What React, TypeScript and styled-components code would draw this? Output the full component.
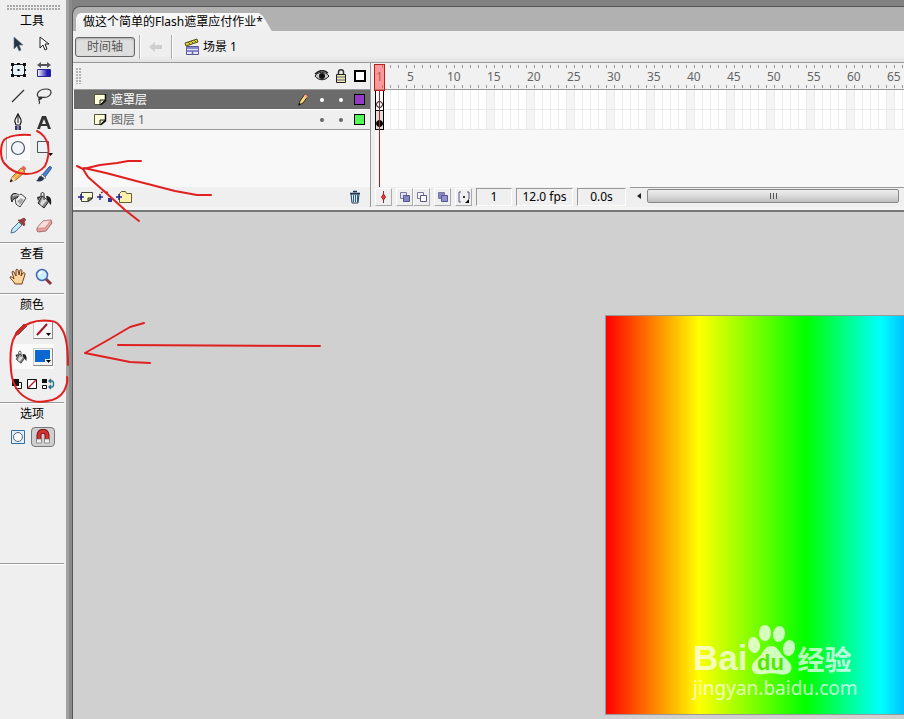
import React from "react";
import styled, { createGlobalStyle, css } from "styled-components";

const GlobalStyle = createGlobalStyle`
  * { box-sizing: border-box; }
  body {
    margin: 0;
    background: #d0d0d0;
    color: #000;
    font: 12px/16px "Noto Sans", "Noto Sans CJK SC", sans-serif;
  }
  button { font: inherit; color: inherit; border: 0; padding: 0; background: none; }
  svg { display: block; flex: none; }
`;

const Page = styled.div`
  position: relative;
  display: flex;
  min-height: 100vh;
  overflow: hidden;
`;

/* ---------- tools panel ---------- */

const Tools = styled.aside`
  flex: none;
  width: 66px;
  background: #efefef;
`;

const Grip = styled.div`
  height: 5px;
  margin: 5px 6px 0 7px;
  background: radial-gradient(circle at 1px 1px, #777 0 0.5px, transparent 1px) 0 0 / 3px 3px;
`;

const Section = styled.section<{ $min?: number }>`
  min-height: ${(p) => p.$min ?? 0}px;
  margin-right: 2px;
  padding-bottom: 3px;
  border-bottom: 1px solid #9a9a9a;
  box-shadow: 0 1px 0 #fff;
`;

const SectionTitle = styled.h2`
  margin: 0;
  font-size: 12px;
  font-weight: 400;
  line-height: 21px;
  text-align: center;
`;

const ToolGrid = styled.div`
  display: grid;
  grid-template-columns: 26px 26px;
  grid-auto-rows: 26px;
  padding-left: 5px;
`;

const ToolButton = styled.button<{ $active?: boolean; $pressed?: boolean }>`
  display: flex;
  align-items: center;
  justify-content: center;
  ${(p) =>
    p.$active &&
    css`
      margin: 1px;
      background: #fafafa;
      border: 1px solid #fff;
      border-left-color: #aaa;
    `}
  ${(p) =>
    p.$pressed &&
    css`
      width: 24px;
      height: 20px;
      margin: 3px 0;
      background: #cfcfcf;
      border: 1px solid #777;
      border-radius: 4px;
    `}
`;

const ColorRow = styled.div<{ $lit?: boolean }>`
  display: flex;
  align-items: center;
  gap: 4px;
  height: 25px;
  margin: 2px 10px 1px 13px;
  background: ${(p) => (p.$lit ? "#fafafa" : "transparent")};
`;

const SwatchButton = styled.button`
  display: flex;
  align-items: center;
  justify-content: center;
  width: 20px;
  height: 18px;
  background: #f6f6f6;
  border: 1px solid #ccc;
  border-right-color: #888;
  border-bottom-color: #888;
`;

const MiniRow = styled.div`
  display: flex;
  justify-content: space-between;
  align-items: center;
  height: 28px;
  margin: 0 9px 0 11px;
`;

const Gutter = styled.div`
  flex: none;
  width: 6px;
  background: linear-gradient(90deg, #a2a2a2 0 50%, #8a8a8a 50%);
`;

/* ---------- document ---------- */

const Workspace = styled.main`
  display: flex;
  flex: 1;
  flex-direction: column;
  min-width: 0;
  padding-top: 6px;
  background: #828282;
`;

const DocumentPanel = styled.div`
  display: flex;
  flex: 1;
  flex-direction: column;
  min-width: 0;
  border-top: 1px solid #555;
  border-left: 1px solid #555;
  border-top-left-radius: 8px;
  background: #b1b1b1;
  overflow: hidden;
`;

const TabBar = styled.div`
  display: flex;
  align-items: flex-end;
  height: 24px;
  padding-left: 3px;
`;

const Tab = styled.button`
  height: 18px;
  padding: 0 9px 0 7px;
  background: linear-gradient(#fafafa, #efefef);
  white-space: nowrap;
  line-height: 18px;
  clip-path: polygon(0 5px, 2px 1px, 5px 0, calc(100% - 13px) 0, calc(100% - 9px) 3px, 100% 100%, 0 100%);
`;

const EditBar = styled.div`
  display: flex;
  align-items: center;
  height: 32px;
  padding-left: 2px;
  background: linear-gradient(#efefef 80%, #e2e2e2);
  border-bottom: 1px solid #999;
`;

const TimelineToggle = styled.button`
  width: 60px;
  height: 20px;
  line-height: 18px;
  color: #555;
  background: #dedede;
  border: 1px solid #666;
  border-radius: 3px;
  box-shadow: inset 0 1px 2px #aaa;
`;

const BarDivider = styled.span`
  width: 2px;
  height: 24px;
  margin: 0 4px;
  background: linear-gradient(90deg, #aaa 50%, #fff 50%);
`;

const BackButton = styled.button`
  display: flex;
  justify-content: center;
  width: 22px;
`;

const SceneLabel = styled.span`
  display: flex;
  align-items: center;
  gap: 3px;
  margin-left: 7px;
`;

const Timeline = styled.section`
  display: grid;
  grid-template-columns: 297px minmax(0, 1fr);
  height: 144px;
  background: #f8f8f8;
`;

const LayerPane = styled.div`
  display: flex;
  flex-direction: column;
  padding-left: 1px;
`;

const layerColumns = css`
  display: grid;
  grid-template-columns: minmax(0, 1fr) repeat(4, 19px);
  align-items: center;
  justify-items: center;
  padding-right: 1px;
`;

const LayerHeader = styled.div`
  ${layerColumns}
  height: 27px;
  background: #efefef;
  border-bottom: 1px solid #999;
`;

const PaneGrip = styled.span`
  justify-self: start;
  width: 6px;
  height: 16px;
  margin-left: 2px;
  background: radial-gradient(circle at 1px 1px, #888 0 0.5px, transparent 1px) 0 0 / 3px 3px;
`;

const LayerRow = styled.div<{ $selected?: boolean }>`
  ${layerColumns}
  height: 20px;
  color: ${(p) => (p.$selected ? "#fff" : "#666")};
  background: ${(p) => (p.$selected ? "#6b6b6b" : "#efefef")};
  border-bottom: 1px solid ${(p) => (p.$selected ? "#fff" : "#999")};
`;

const LayerName = styled.span`
  display: flex;
  align-items: center;
  justify-self: start;
  gap: 4px;
  padding-left: 19px;
  line-height: 19px;
`;

const Dot = styled.button`
  width: 4px;
  height: 4px;
  border-radius: 50%;
  background: currentColor;
`;

const OutlineSwatch = styled.button<{ $color: string; $bold?: boolean }>`
  width: ${(p) => (p.$bold ? 12 : 11)}px;
  height: ${(p) => (p.$bold ? 12 : 11)}px;
  border: ${(p) => (p.$bold ? 2 : 1)}px solid #000;
  background: ${(p) => p.$color};
`;

const LayerFooter = styled.div`
  display: flex;
  align-items: center;
  gap: 3px;
  height: 20px;
  margin-top: auto;
  padding: 0 9px 0 4px;
  background: #efefef;
`;

const Spacer = styled.span`
  flex: 1;
`;

const FramePane = styled.div`
  position: relative;
  display: flex;
  flex-direction: column;
  padding-left: 4px;
  border-left: 1px solid #999;
  overflow: hidden;
  background: linear-gradient(90deg, #efefef 4px, transparent 4px);
`;

const tick = "repeating-linear-gradient(90deg, transparent 0 7px, #999 7px 8px)";

const Ruler = styled.div`
  display: flex;
  flex: none;
  height: 27px;
  padding-top: 1px;
  color: #666;
  line-height: 26px;
  background: ${tick} 0 2px / 100% 3px no-repeat, ${tick} 0 22px / 100% 3px no-repeat, #f1f1f1;
  border-bottom: 1px solid #999;
`;

const RulerMark = styled.span<{ $first?: boolean }>`
  flex: none;
  width: ${(p) => (p.$first ? 32 : 40)}px;
  padding-left: ${(p) => (p.$first ? 1 : 0)}px;
  &:last-child { width: auto; }
`;

const FrameRow = styled.div`
  flex: none;
  height: 20px;
  border-bottom: 1px solid #e8e8e8;
  background:
    repeating-linear-gradient(90deg, transparent 0 7px, #ebebeb 7px 8px),
    repeating-linear-gradient(90deg, #fff 0 32px, #f5f5f5 32px 40px);
`;

const Keyframe = styled.div<{ $filled?: boolean }>`
  display: flex;
  align-items: flex-end;
  justify-content: center;
  width: 9px;
  height: 20px;
  padding-bottom: 2px;
  border: 1px solid #000;
  border-top-width: ${(p) => (p.$filled ? 1 : 0)}px;
  border-bottom-width: ${(p) => (p.$filled ? 1 : 0)}px;
  background: ${(p) => (p.$filled ? "#ddd" : "#fff")};
  &::after {
    content: "";
    width: 5px;
    height: 5px;
    border: 1px solid #000;
    border-radius: 50%;
    background: ${(p) => (p.$filled ? "#000" : "#fff")};
  }
`;

const Playhead = styled.div`
  position: absolute;
  top: 1px;
  bottom: 20px;
  left: 4px;
  display: flex;
  flex-direction: column;
  align-items: center;
  width: 9px;
  &::before {
    content: "";
    width: 100%;
    height: 25px;
    border: 1px solid #b82020;
    background: rgba(255, 80, 80, 0.55);
  }
  &::after {
    content: "";
    flex: 1;
    width: 1px;
    background: #b81818;
  }
`;

const StatusBar = styled.div`
  display: flex;
  align-items: stretch;
  gap: 4px;
  height: 20px;
  margin-top: auto;
  margin-left: -4px;
  padding: 1px 0 1px 4px;
  background: #efefef;
`;

const ButtonPair = styled.span`
  display: flex;
`;

const FrameButton = styled.button`
  display: flex;
  align-items: center;
  justify-content: center;
  width: 17px;
  border: 1px solid #fff;
  border-right-color: #aaa;
  border-bottom-color: #aaa;
`;

const Readout = styled.output<{ $width: number }>`
  flex: none;
  width: ${(p) => p.$width}px;
  border: 1px solid #fff;
  border-top-color: #999;
  border-left-color: #999;
  line-height: 16px;
  text-align: center;
  white-space: nowrap;
`;

const Scrollbar = styled.div`
  display: flex;
  flex: 1;
  min-width: 0;
  margin-top: -1px;
  padding: 1px 5px 3px 0;
  border-top: 1px solid #999;
`;

const ScrollArrow = styled.button`
  display: flex;
  align-items: center;
  justify-content: center;
  width: 17px;
`;

const ScrollThumb = styled.div`
  display: flex;
  flex: 1;
  align-items: center;
  justify-content: center;
  border: 1px solid #888;
  border-radius: 2px;
  background: linear-gradient(#eee, #ddd 45%, #bebebe);
`;

const Stage = styled.section`
  flex: 1;
  min-height: 508px;
  padding: 103px 0 0 532px;
  border-top: 2px solid #777;
  background: #d0d0d0;
  overflow: hidden;
`;

const PanelEdge = styled.div`
  height: 3px;
  background: #f4f4f4;
`;

const Canvas = styled.div`
  position: relative;
  width: 550px;
  height: 400px;
  border: 1px solid #999;
  background: linear-gradient(
    90deg,
    #f00 0, #ff0 93px, #0f0 200px, #0ff 275px, #00f 370px, #f0f 460px, #f00 550px
  );
`;

const Watermark = styled.div`
  position: absolute;
  left: 87px;
  bottom: 13px;
  color: rgba(255, 255, 255, 0.74);
  white-space: nowrap;
`;

const Brand = styled.div`
  display: flex;
  align-items: flex-end;
  height: 53px;
`;

const BrandLatin = styled.span`
  font: 700 35px/34px "Liberation Sans", sans-serif;
`;

const BrandHan = styled.span`
  margin-left: 2px;
  font: 700 27px/32px "Noto Sans CJK SC", sans-serif;
`;

const Site = styled.div`
  font-size: 19px;
  line-height: 26px;
`;

const Annotations = styled.svg`
  position: absolute;
  top: 0;
  left: 0;
  pointer-events: none;
`;

/* ---------- icons ---------- */

const Icon = ({ children, w = 18, h = 18 }: { children: React.ReactNode; w?: number; h?: number }) => (
  <svg width={w} height={h} viewBox={`0 0 ${w} ${h}`} fill="none" aria-hidden="true">
    {children}
  </svg>
);

const bucketPaths = (
  <>
    <path d="M7 5l7 5-5 7-6-5z" fill="#888" stroke="#222" />
    <path d="M8 6l4 3-5 6-2-2z" fill="#ddd" />
    <path d="M9 9V3c0-2-3-2-3 0v3" stroke="#222" />
    <path d="M11 5c4 0 6 2 5 9-2-1-2-4-4-5z" fill="#222" />
    <path d="M2 6l4-1-3 5z" fill="#333" />
  </>
);

const tools: { name: string; active?: boolean; icon: React.ReactNode }[] = [
  { name: "选择", icon: <path d="M5 2v12l3-3 2 5 2-1-2-5h4z" fill="#263445" stroke="#61758a" strokeWidth=".6" /> },
  { name: "部分选取", icon: <path d="M5 2v11l3-3 2 5 2-1-2-5h4z" fill="#fff" stroke="#222" /> },
  {
    name: "任意变形",
    icon: (
      <>
        <path d="M3.500 3.500h12v11h-12z" fill="#e7f3fa" stroke="#222" />
        <path d="M2 2h3v3H2zM8 2h3v2H8zM14 2h3v3h-3zM2 8h2v2H2zM15 8h2v2h-2zM2 13h3v3H2zM8 14h3v2H8zM14 13h3v3h-3zM8.500 8h2v2h-2z" fill="#111" />
      </>
    ),
  },
  {
    name: "填充变形",
    icon: (
      <>
        <defs>
          <linearGradient id="blueFade">
            <stop stopColor="#fff" />
            <stop offset=".75" stopColor="#2018b0" />
          </linearGradient>
        </defs>
        <path d="M2 4l4-3v2h6V1l4 3-4 3V5H6v2z" fill="#555" />
        <path d="M2.500 8.500h13v7h-13z" fill="url(#blueFade)" stroke="#2a2790" />
      </>
    ),
  },
  { name: "线条", icon: <path d="M3 15L15 3" stroke="#333" strokeWidth="1.300" /> },
  {
    name: "套索",
    icon: <path d="M5 11C-1 8 4 2 11 2s6 6 1 8c-3 1-6 0-7 0-2 1-1 3 1 2s-1-2-2 0 2 2 0 5" stroke="#333" strokeWidth="1.200" />,
  },
  {
    name: "钢笔",
    icon: (
      <>
        <path d="M9 1c-2 4-4 6-3 8l1 3h4l1-3c1-2-1-4-3-8z" fill="#f5f5f5" stroke="#111" strokeWidth="1.200" />
        <path d="M9 2v6M9 8v2" stroke="#111" />
        <path d="M6 13h6v4H6z" fill="#33335e" />
        <path d="M8 13h2v4H8z" fill="#8585ad" />
      </>
    ),
  },
  { name: "文本", icon: <path fillRule="evenodd" d="M7 3h4l5 13h-3l-1-3H6l-1 3H2zM9 6l-2 5h4z" fill="#333" /> },
  { name: "椭圆", active: true, icon: <circle cx="9" cy="9" r="6.500" fill="#f0f5f8" stroke="#4e5860" strokeWidth="1.200" /> },
  {
    name: "矩形",
    icon: (
      <>
        <path d="M2.500 2.500h11v11h-11z" fill="#edf2f5" stroke="#4a545c" />
        <path d="M13 14h5l-2.500 3z" fill="#000" />
      </>
    ),
  },
  {
    name: "铅笔",
    icon: (
      <>
        <path d="M1 17l2-5 9-9 4 4-9 8z" fill="#f4a638" stroke="#8a4a20" strokeWidth=".7" />
        <path d="M12 3l2-2c2 0 3 2 3 3l-2 3z" fill="#e06858" />
        <path d="M3 12l4 3-5 2z" fill="#f6dfb5" />
        <path d="M1 17l1-3 2 2z" fill="#111" />
        <path d="M5 13l9-8" stroke="#ffe3a0" />
      </>
    ),
  },
  {
    name: "刷子",
    icon: (
      <>
        <path d="M7 10l7-8c2-1 3 0 2 2l-6 8z" fill="#4a82d4" stroke="#1d3d7a" strokeWidth=".8" />
        <path d="M7 9l4 4-2 1-3-3z" fill="#ddd" stroke="#555" strokeWidth=".5" />
        <path d="M6 11c-3 0-2 3-5 5 4 1 8 0 8-3z" fill="#26344c" />
      </>
    ),
  },
  {
    name: "墨水瓶",
    icon: (
      <>
        <path d="M6 7l6-4 5 4-6 9-4-3z" fill="#f0f0f0" stroke="#444" />
        <path d="M8 10l4-3 3 2-4 5z" fill="#aaa" />
        <path d="M10 4C4 0 0 4 3 11c1-3 2-4 5-4z" fill="#777" stroke="#222" />
        <path d="M4 5c3-2 5-1 7 0" stroke="#eee" />
      </>
    ),
  },
  { name: "颜料桶", icon: bucketPaths },
  {
    name: "滴管",
    icon: (
      <>
        <path d="M2 16l1-4 7-7 3 3-7 7z" fill="#c2e4f8" stroke="#45627a" strokeWidth=".9" />
        <path d="M9 3l6 6 1-2-1-2c3-2 1-5-2-3l-2 1z" fill="#9f3a38" stroke="#682020" strokeWidth=".6" />
      </>
    ),
  },
  {
    name: "橡皮擦",
    icon: (
      <>
        <path d="M2 11l6-7 8-1 1 3-6 8-8 1-1-1z" fill="#e6a0a0" stroke="#955" strokeWidth=".8" />
        <path d="M2 11l6-7 8-1-6 8z" fill="#fbdcd8" stroke="#b77" strokeWidth=".6" />
      </>
    ),
  },
];

const HandIcon = () => (
  <Icon>
    <path
      d="M6 16c-1-3-5-5-5-7 1-1 2 0 4 2L3 4c0-1 2-1 2 0l2 4V2c0-1 2-1 2 0l1 5 1-5c1-1 2 0 2 1l-1 5 2-3c1-1 2 0 2 1-1 4-2 6-3 10z"
      fill="#fbd49c"
      stroke="#6a3f1c"
    />
  </Icon>
);

const ZoomIcon = () => (
  <Icon>
    <path d="M11 11l5 5" stroke="#8c343c" strokeWidth="3" />
    <circle cx="7" cy="7" r="5.500" fill="#cdeefd" stroke="#3f68b0" strokeWidth="1.500" />
    <path d="M4 7c0-2 1-3 3-3" stroke="#fff" strokeWidth="1.500" />
  </Icon>
);

const LayerIcon = () => (
  <Icon w={14} h={13}>
    <path d="M1.500 1.500h11v6l-5 4h-6z" fill="#ffffdc" stroke="#55553a" />
    <path d="M12.500 1v7l-5 4" stroke="#111" strokeWidth="1.500" />
    <path d="M7 12V7h5z" fill="#e4e4b0" stroke="#222" />
  </Icon>
);

const Plus = () => <path d="M0 7h6M3 4v6" stroke="#262690" strokeWidth="1.500" />;

const stacked = (back: string, front: string) => (
  <Icon w={12} h={12}>
    <path d="M1.500 1.500h6v6h-6z" fill={back} stroke="#7878a5" />
    <path d="M4.500 4.500h6v6h-6z" fill={front} stroke="#55558c" />
  </Icon>
);

/* ---------- parts ---------- */

const ToolsPanel = () => (
  <Tools aria-label="工具">
    <Grip />
    <Section $min={233}>
      <SectionTitle>工具</SectionTitle>
      <ToolGrid>
        {tools.map((t) => (
          <ToolButton key={t.name} aria-label={t.name} $active={t.active}>
            <Icon>{t.icon}</Icon>
          </ToolButton>
        ))}
      </ToolGrid>
    </Section>
    <Section>
      <SectionTitle>查看</SectionTitle>
      <ToolGrid>
        <ToolButton aria-label="手形">
          <HandIcon />
        </ToolButton>
        <ToolButton aria-label="缩放">
          <ZoomIcon />
        </ToolButton>
      </ToolGrid>
    </Section>
    <Section $min={109}>
      <SectionTitle>颜色</SectionTitle>
      <ColorRow>
        <Icon w={16} h={16}>
          <path d="M2 14l1-4 8-8 3 2-8 8z" fill="#9b4032" stroke="#6e2820" strokeWidth=".7" />
        </Icon>
        <SwatchButton aria-label="笔触颜色">
          <Icon w={18} h={16}>
            <path d="M3 13L13 2" stroke="#a41428" strokeWidth="2" />
            <path d="M12 11h5l-2.500 3z" fill="#000" />
          </Icon>
        </SwatchButton>
      </ColorRow>
      <ColorRow $lit>
        <svg width="16" height="14" viewBox="0 0 18 18" fill="none" aria-hidden="true">
          {bucketPaths}
        </svg>
        <SwatchButton aria-label="填充色">
          <Icon w={18} h={16}>
            <path d="M1 1h15v12H1z" fill="#0c68d0" />
            <path d="M11 10h7v6h-7z" fill="#f6f6f6" />
            <path d="M12 11h5l-2.500 3z" fill="#000" />
          </Icon>
        </SwatchButton>
      </ColorRow>
      <MiniRow>
        <ToolButton aria-label="黑白">
          <Icon w={12} h={12}>
            <path d="M4.500 4.500h6v6h-6z" fill="#fff" stroke="#111" />
            <path d="M1 1h7v7H1z" fill="#111" />
          </Icon>
        </ToolButton>
        <ToolButton aria-label="没有颜色">
          <Icon w={12} h={12}>
            <path d="M1.500 1.500h9v9h-9z" fill="#fff" stroke="#111" />
            <path d="M2 10l8-8" stroke="#c22030" strokeWidth="1.500" />
          </Icon>
        </ToolButton>
        <ToolButton aria-label="交换颜色">
          <Icon w={14} h={12}>
            <path d="M1 1h5v4H1z" fill="#111" />
            <path d="M1.500 7.500h4v3h-4z" fill="#fff" stroke="#111" />
            <path d="M8 3h3c2 0 2 6 0 6H8M10 1L8 3l2 2M10 7L8 9l2 2" stroke="#2b7388" strokeWidth="1.400" />
          </Icon>
        </ToolButton>
      </MiniRow>
    </Section>
    <Section $min={161}>
      <SectionTitle>选项</SectionTitle>
      <ToolGrid>
        <ToolButton aria-label="对象绘制">
          <Icon w={16} h={16}>
            <path d="M1.500 1.500h13v13h-13z" fill="#e4f1fa" stroke="#35709e" />
            <circle cx="8" cy="8" r="4.500" fill="#f8fcff" stroke="#56636e" />
          </Icon>
        </ToolButton>
        <ToolButton aria-label="贴紧至对象" $pressed>
          <Icon w={16} h={16}>
            <path d="M4 12V6c0-5 8-5 8 0v6" stroke="#7a1014" strokeWidth="5" />
            <path d="M4 12V6c0-5 8-5 8 0v6" stroke="#d33032" strokeWidth="3" />
            <path d="M1.500 10h5v4h-5zM9.500 10h5v4h-5z" fill="#eee" stroke="#666" strokeWidth=".6" />
          </Icon>
        </ToolButton>
      </ToolGrid>
    </Section>
  </Tools>
);

const layers = [
  { name: "遮罩层", color: "#9838c8", selected: true },
  { name: "图层 1", color: "#50f858", selected: false },
];

const Layers = () => (
  <LayerPane>
    <LayerHeader>
      <PaneGrip />
      <span />
      <Icon w={16} h={12}>
        <path d="M1 6c3-5 10-5 14 0-4 5-10 5-14 0z" fill="#ccc" stroke="#111" />
        <circle cx="8" cy="6" r="3" fill="#111" />
        <path d="M1 4c4-4 9-4 13-1" stroke="#222" strokeWidth="1.500" />
      </Icon>
      <Icon w={12} h={14}>
        <path d="M3.500 6V3c0-3 5-3 5 0v3" stroke="#333" strokeWidth="1.500" />
        <path d="M1.500 5.500h9v8h-9z" fill="#f3e7a4" stroke="#222" />
        <path d="M2 8h8M2 11h8" stroke="#536390" />
      </Icon>
      <OutlineSwatch $color="#fff" $bold aria-label="显示所有图层轮廓" />
    </LayerHeader>
    {layers.map((l) => (
      <LayerRow key={l.name} $selected={l.selected}>
        <LayerName>
          <LayerIcon />
          {l.name}
        </LayerName>
        {l.selected ? (
          <Icon w={12} h={14}>
            <path d="M2 12l1-4 5-7 3 2-5 7z" fill="#f5d878" stroke="#3c2a18" />
            <path d="M8 1l3 2-1 2-3-2z" fill="#e99a80" />
            <path d="M1 13l1-3 2 1z" fill="#111" />
          </Icon>
        ) : (
          <span />
        )}
        <Dot aria-label="显示图层" />
        <Dot aria-label="锁定图层" />
        <OutlineSwatch $color={l.color} aria-label="显示轮廓" />
      </LayerRow>
    ))}
    <LayerFooter>
      <ToolButton aria-label="插入图层">
        <Icon w={16} h={14}>
          <path d="M3.500 2.500h11v6l-4 3h-7z" fill="#ffffd5" stroke="#444" />
          <path d="M10 11V8h4z" fill="#d8d8a0" stroke="#222" />
          <path d="M0 4h3v6H0z" fill="#efefef" />
          <Plus />
        </Icon>
      </ToolButton>
      <ToolButton aria-label="添加运动引导层">
        <Icon w={16} h={14}>
          <Plus />
          <path d="M4 3l3-2 3 1 2 4" stroke="#b02030" strokeDasharray="2 1" strokeWidth="1.500" />
          <path d="M11 8h4v4h-4z" fill="#34349a" />
        </Icon>
      </ToolButton>
      <ToolButton aria-label="插入图层文件夹">
        <Icon w={16} h={14}>
          <path d="M3.500 12.500v-9l2-2h4l1 2h5v9z" fill="#fbf0ad" stroke="#665c30" />
          <Plus />
        </Icon>
      </ToolButton>
      <Spacer />
      <ToolButton aria-label="删除图层">
        <Icon w={12} h={14}>
          <path d="M2 4h8l-1 9H3z" fill="#dcebf7" stroke="#223f5c" />
          <path d="M4.500 5v7M6.500 5v7M8.500 5v7" stroke="#345d82" />
          <path d="M1 3.500h10M4 1.500h4" stroke="#1d3750" strokeWidth="1.500" />
        </Icon>
      </ToolButton>
    </LayerFooter>
  </LayerPane>
);

const marks = [1, ...Array.from({ length: 13 }, (_, i) => (i + 1) * 5)];

const Frames = () => (
  <FramePane>
    <Ruler>
      {marks.map((n) => (
        <RulerMark key={n} $first={n === 1}>
          {n}
        </RulerMark>
      ))}
    </Ruler>
    <FrameRow>
      <Keyframe />
    </FrameRow>
    <FrameRow>
      <Keyframe $filled />
    </FrameRow>
    <Playhead />
    <StatusBar>
      <FrameButton aria-label="帧居中">
        <Icon w={9} h={14}>
          <path d="M4.500 1v12" stroke="#b41c1c" />
          <path d="M4.500 4l2 3-2 3-2-3z" fill="#e04040" stroke="#b41c1c" />
        </Icon>
      </FrameButton>
      <ButtonPair>
        <FrameButton aria-label="绘图纸外观">{stacked("#e2e2f2", "#8585c4")}</FrameButton>
        <FrameButton aria-label="绘图纸外观轮廓">{stacked("#f5f5fa", "#fff")}</FrameButton>
      </ButtonPair>
      <FrameButton aria-label="编辑多个帧">{stacked("#8585c4", "#9090cc")}</FrameButton>
      <FrameButton aria-label="修改绘图纸标记">
        <Icon w={12} h={12}>
          <path d="M3 1H1v10h2M9 1h2v7" stroke="#55558c" />
          <path d="M5 5h2v2H5z" fill="#333" />
          <path d="M11 8v4H7z" fill="#000" />
        </Icon>
      </FrameButton>
      <Readout $width={36}>1</Readout>
      <Readout $width={57}>12.0 fps</Readout>
      <Readout $width={49}>0.0s</Readout>
      <Scrollbar>
        <ScrollArrow aria-label="向左滚动">
          <Icon w={4} h={8}>
            <path d="M4 1v6L0 4z" fill="#222" />
          </Icon>
        </ScrollArrow>
        <ScrollThumb>
          <Icon w={9} h={6}>
            <path d="M1.500 0v6M4.500 0v6M7.500 0v6" stroke="#555" />
          </Icon>
        </ScrollThumb>
      </Scrollbar>
    </StatusBar>
  </FramePane>
);

const Paw = () => (
  <svg width="48" height="52" viewBox="0 0 48 52" fill="currentColor" aria-hidden="true">
    <ellipse cx="7" cy="22" rx="6" ry="8" transform="rotate(-10 7 22)" />
    <ellipse cx="18" cy="10" rx="6" ry="8" />
    <ellipse cx="32" cy="11" rx="6" ry="8" transform="rotate(10 32 11)" />
    <ellipse cx="42" cy="25" rx="6" ry="8" transform="rotate(12 42 25)" />
    <path d="M24 23c6 0 8 5 12 10 5 5 10 8 8 14-2 5-7 5-12 4-5-1-10-1-15 0-6 1-11 0-12-5-1-6 4-9 8-13 4-5 5-10 11-10z" />
    <text x="10" y="47" fill="#52ea00" fontFamily="Liberation Sans, sans-serif" fontWeight="700" fontSize="22">
      du
    </text>
  </svg>
);

export default function App() {
  return (
    <Page>
      <GlobalStyle />
      <ToolsPanel />
      <Gutter />
      <Workspace>
        <DocumentPanel>
          <TabBar>
            <Tab>做这个简单的Flash遮罩应付作业*</Tab>
          </TabBar>
          <EditBar>
            <TimelineToggle aria-pressed="true">时间轴</TimelineToggle>
            <BarDivider />
            <BackButton aria-label="返回">
              <Icon w={14} h={12}>
                <path d="M0 6l6-5v3h7v4H6v3z" fill="#cfcfcf" />
              </Icon>
            </BackButton>
            <BarDivider />
            <SceneLabel>
              <Icon w={16} h={18}>
                <path d="M2.500 8.500h12v8h-12z" fill="#e6e6fa" stroke="#55558e" />
                <path d="M2 10h13M2 13h13M8.500 13v3" stroke="#6a6ab0" strokeWidth="1.500" />
                <path d="M1 5l12-4 1 3L2 8z" fill="#e4d22c" stroke="#55501a" />
                <path d="M4 4l2 2M7 3l2 2M10 2l2 2" stroke="#55501a" />
              </Icon>
              场景 1
            </SceneLabel>
          </EditBar>
          <Timeline>
            <Layers />
            <Frames />
          </Timeline>
          <PanelEdge />
          <Stage>
            <Canvas>
              <Watermark>
                <Brand>
                  <BrandLatin>Bai</BrandLatin>
                  <Paw />
                  <BrandHan>经验</BrandHan>
                </Brand>
                <Site>jingyan.baidu.com</Site>
              </Watermark>
            </Canvas>
          </Stage>
        </DocumentPanel>
      </Workspace>
      <Annotations
        width="330"
        height="410"
        viewBox="0 0 330 410"
        fill="none"
        stroke="#e02020"
        strokeWidth="2"
        strokeLinecap="round"
        strokeLinejoin="round"
        aria-hidden="true"
      >
        <path d="M30 135C20 134 8 136 4 140 0 146 0 157 4 163c5 6 12 11 22 11 8 0 15-3 19-8 3-6 4-15 3-21-1-6-6-12-11-14" />
        <path d="M68 365c0-14-1-26-5-34-3-6-6-10-12-10-8-1-16 0-21 2-8 3-14 10-17 17-3 9-3 20-2 30 1 12 6 22 14 27 6 4 14 6 22 4 8-1 14-5 17-10 2-4 4-10 3-14" />
        <path d="M77 166l6 3 17-4 17-2 11-2h13M84 168l22 5 34 9 35 9 22 4h14M83 169l5 8 17 15 20 18 14 11" />
        <path d="M118 345l202 1M144 323l-14 4-22 13-23 13M85 353l25 5 20 4 20 1" />
      </Annotations>
    </Page>
  );
}
